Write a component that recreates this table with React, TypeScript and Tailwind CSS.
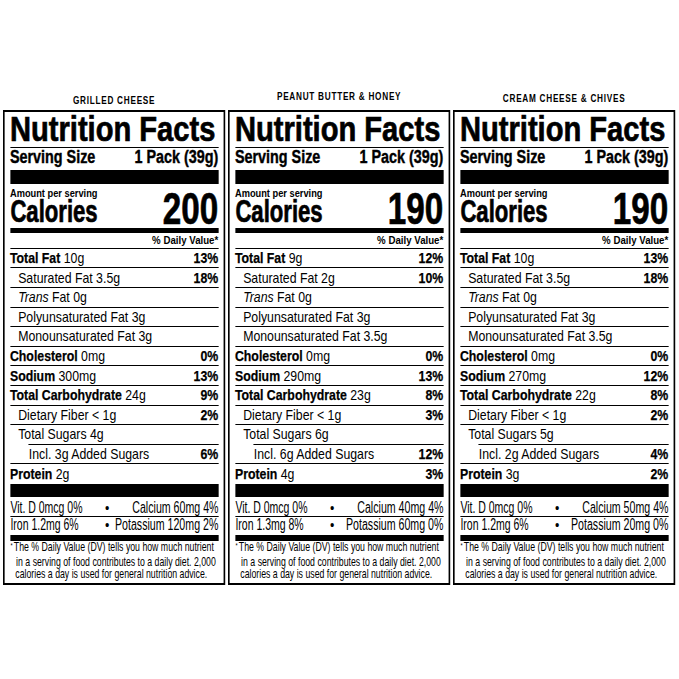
import React from 'react';

type Row = {
  label: string;
  amount?: string;
  dv?: string;
  bold?: boolean;
  indent?: 0 | 1 | 2;
  italic?: string;
};

type Panel = {
  title: string;
  titlePad: string;
  calories: string;
  rows: Row[];
  vit: [string, string, string, string];
};

const panels: Panel[] = [
  {
    title: 'GRILLED CHEESE',
    titlePad: 'pt-[11px]',
    calories: '200',
    rows: [
      { label: 'Total Fat', amount: '10g', dv: '13%', bold: true },
      { label: 'Saturated Fat', amount: '3.5g', dv: '18%', indent: 1 },
      { label: 'Fat', italic: 'Trans', amount: '0g', indent: 1 },
      { label: 'Polyunsaturated Fat', amount: '3g', indent: 1 },
      { label: 'Monounsaturated Fat', amount: '3g', indent: 1 },
      { label: 'Cholesterol', amount: '0mg', dv: '0%', bold: true },
      { label: 'Sodium', amount: '300mg', dv: '13%', bold: true },
      { label: 'Total Carbohydrate', amount: '24g', dv: '9%', bold: true },
      { label: 'Dietary Fiber', amount: '< 1g', dv: '2%', indent: 1 },
      { label: 'Total Sugars', amount: '4g', indent: 1 },
      { label: 'Incl. 3g Added Sugars', dv: '6%', indent: 2 },
      { label: 'Protein', amount: '2g', bold: true },
    ],
    vit: ['Vit. D 0mcg 0%', 'Calcium 60mg 4%', 'Iron 1.2mg 6%', 'Potassium 120mg 2%'],
  },
  {
    title: 'PEANUT BUTTER & HONEY',
    titlePad: 'pt-[7px]',
    calories: '190',
    rows: [
      { label: 'Total Fat', amount: '9g', dv: '12%', bold: true },
      { label: 'Saturated Fat', amount: '2g', dv: '10%', indent: 1 },
      { label: 'Fat', italic: 'Trans', amount: '0g', indent: 1 },
      { label: 'Polyunsaturated Fat', amount: '3g', indent: 1 },
      { label: 'Monounsaturated Fat', amount: '3.5g', indent: 1 },
      { label: 'Cholesterol', amount: '0mg', dv: '0%', bold: true },
      { label: 'Sodium', amount: '290mg', dv: '13%', bold: true },
      { label: 'Total Carbohydrate', amount: '23g', dv: '8%', bold: true },
      { label: 'Dietary Fiber', amount: '< 1g', dv: '3%', indent: 1 },
      { label: 'Total Sugars', amount: '6g', indent: 1 },
      { label: 'Incl. 6g Added Sugars', dv: '12%', indent: 2 },
      { label: 'Protein', amount: '4g', dv: '3%', bold: true },
    ],
    vit: ['Vit. D 0mcg 0%', 'Calcium 40mg 4%', 'Iron 1.3mg 8%', 'Potassium 60mg 0%'],
  },
  {
    title: 'CREAM CHEESE & CHIVES',
    titlePad: 'pt-[9px]',
    calories: '190',
    rows: [
      { label: 'Total Fat', amount: '10g', dv: '13%', bold: true },
      { label: 'Saturated Fat', amount: '3.5g', dv: '18%', indent: 1 },
      { label: 'Fat', italic: 'Trans', amount: '0g', indent: 1 },
      { label: 'Polyunsaturated Fat', amount: '3g', indent: 1 },
      { label: 'Monounsaturated Fat', amount: '3.5g', indent: 1 },
      { label: 'Cholesterol', amount: '0mg', dv: '0%', bold: true },
      { label: 'Sodium', amount: '270mg', dv: '12%', bold: true },
      { label: 'Total Carbohydrate', amount: '22g', dv: '8%', bold: true },
      { label: 'Dietary Fiber', amount: '< 1g', dv: '2%', indent: 1 },
      { label: 'Total Sugars', amount: '5g', indent: 1 },
      { label: 'Incl. 2g Added Sugars', dv: '4%', indent: 2 },
      { label: 'Protein', amount: '3g', dv: '2%', bold: true },
    ],
    vit: ['Vit. D 0mcg 0%', 'Calcium 50mg 4%', 'Iron 1.2mg 6%', 'Potassium 20mg 0%'],
  },
];

// extra horizontal squeeze for the tighter condensed bits of the label
const Sq = ({ k, right, children }: { k: string; right?: boolean; children: React.ReactNode }) => (
  <span className={`inline-block whitespace-nowrap ${right ? 'origin-right' : 'origin-left'} ${k}`}>
    {children}
  </span>
);

const NutrientRow = ({ row, next }: { row: Row; next?: Row }) => {
  const lineIndent = next?.indent === 2 ? 'ml-[22px]' : '';
  const pad = row.indent === 2 ? 'pl-[23px]' : row.indent === 1 ? 'pl-[10px]' : '';
  return (
    <div>
      <div className={`flex h-[18.6px] items-center justify-between whitespace-nowrap text-[15px] leading-[18px] ${pad}`}>
        <span>
          {row.italic && <i className="mr-[4px]">{row.italic}</i>}
          <span className={row.bold ? 'font-bold [-webkit-text-stroke:0.25px_#000]' : ''}>{row.label}</span>
          {row.amount && <span> {row.amount}</span>}
        </span>
        {row.dv && <span className="font-bold [-webkit-text-stroke:0.25px_#000]">{row.dv}</span>}
      </div>
      {next && <div className={`h-px bg-black ${lineIndent}`} />}
    </div>
  );
};

const VitRow = ({ left, right, lead }: { left: string; right: string; lead: string }) => (
  <div className={`flex h-[18px] items-start text-[16px] ${lead}`}>
    <span className="w-[116px] shrink-0">
      <Sq k="scale-x-[0.8]">{left}</Sq>
    </span>
    <span className="shrink-0 text-[15px]">•</span>
    <span className="flex min-w-0 flex-1 justify-end">
      <Sq k="scale-x-[0.81]" right>
        {right}
      </Sq>
    </span>
  </div>
);

const Label = ({ p }: { p: Panel }) => (
  <div className="w-[222px] shrink-0">
    <div className="w-[271px] origin-top-left scale-x-[0.82]">
      <div className={`h-[25px] text-center text-[10px] font-bold leading-[10px] tracking-[0.9px] ${p.titlePad}`}>
        {p.title}
      </div>
      <div className="border-2 border-black px-[6.5px] pb-[3px]">
        <div className="h-[34.8px] whitespace-nowrap text-[35.5px] font-bold leading-[34.8px] [-webkit-text-stroke:0.7px_#000]">
          Nutrition Facts
        </div>
        <div className="h-px bg-black" />
        <div className="flex h-[22px] items-start justify-between whitespace-nowrap text-[17.5px] font-bold leading-[19px] [-webkit-text-stroke:0.4px_#000]">
          <span>Serving Size</span>
          <span>1 Pack (39g)</span>
        </div>
        <div className="h-[14px] bg-black" />
        <div className="mt-[3px] h-[12px] text-[11.3px] font-bold leading-[12px]">Amount per serving</div>
        <div className="flex h-[29px] items-end justify-between [-webkit-text-stroke:0.7px_#000]">
          <span className="relative -top-[4px] text-[31px] font-bold leading-[25px]">
            <Sq k="scale-x-[0.87]">Calories</Sq>
          </span>
          <span className="relative -top-[8.5px] text-[44px] font-bold leading-[21px]">
            <Sq k="scale-x-[0.92]" right>
              {p.calories}
            </Sq>
          </span>
        </div>
        <div className="h-[5px] bg-black" />
        <div className="h-[15px] text-right text-[11.8px] font-bold leading-[15px]">% Daily Value*</div>
        <div className="h-px bg-black" />
        {p.rows.map((r, i) => (
          <NutrientRow key={i} row={r} next={p.rows[i + 1]} />
        ))}
        <div className="mt-[1px] h-[13.5px] bg-black" />
        <div className="h-[19px]">
          <VitRow left={p.vit[0]} right={p.vit[1]} lead="leading-[21px]" />
        </div>
        <div className="h-px bg-black" />
        <VitRow left={p.vit[2]} right={p.vit[3]} lead="leading-[15px]" />
        <div className="h-[6px] bg-black" />
        <div className="text-[13px] leading-[12.3px]">
          <div>
            <Sq k="scale-x-[0.82]">
              <span className="relative -top-[3px] mr-[2px] text-[8px]">*</span>The % Daily Value (DV) tells you how much nutrient
            </Sq>
          </div>
          <div className="pl-[7px]">
            <Sq k="scale-x-[0.82]">in a serving of food contributes to a daily diet. 2,000</Sq>
          </div>
          <div className="pl-[6px]">
            <Sq k="scale-x-[0.82]">calories a day is used for general nutrition advice.</Sq>
          </div>
        </div>
      </div>
    </div>
  </div>
);

export default function App() {
  return (
    <div className="h-[679px] w-[679px] overflow-hidden bg-white pt-[85px] pl-[3px] text-black font-['Liberation_Sans',Arial,sans-serif]">
      <div className="flex gap-[3px]">
        {panels.map((p) => (
          <Label key={p.title} p={p} />
        ))}
      </div>
    </div>
  );
}
